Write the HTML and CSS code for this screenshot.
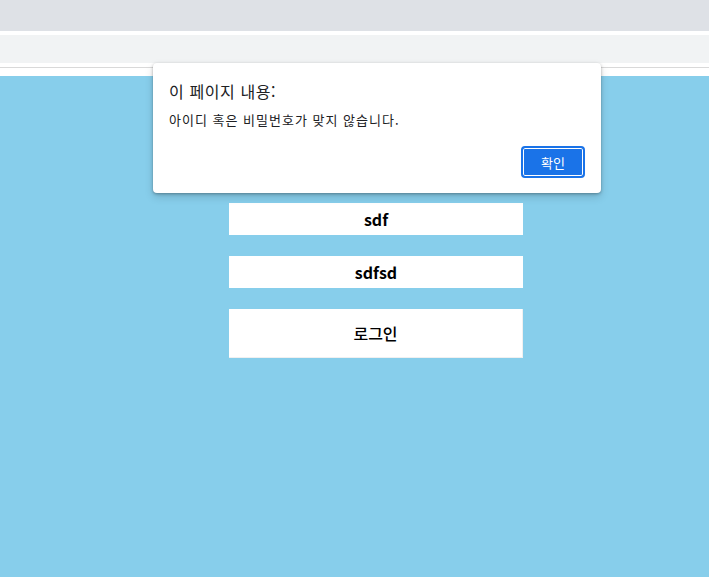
FILE: index.html
```html
<!DOCTYPE html>
<html lang="ko">
<head>
<meta charset="utf-8">
<title>로그인</title>
<link rel="stylesheet" href="styles.css">
</head>
<body>
<div class="chrome">
  <div class="tabs"></div>
  <div class="toolbar"></div>
  <div class="divider"></div>
</div>
<main class="page">
  <form class="login">
    <input class="field" type="text" value="sdf">
    <input class="field" type="text" value="sdfsd">
    <button class="submit" type="button">로그인</button>
  </form>
</main>
<div class="dialog" role="alertdialog">
  <div class="dialog-title">이 페이지 내용:</div>
  <div class="dialog-msg">아이디 혹은 비밀번호가 맞지 않습니다.</div>
  <div class="dialog-actions">
    <button class="ok" type="button">확인</button>
  </div>
</div>
</body>
</html>
```
FILE: styles.css
```css
html, body {
  margin: 0;
  height: 100%;
}
body {
  display: flex;
  flex-direction: column;
  background: #fff;
  font-family: "Noto Sans CJK KR", "Noto Sans", sans-serif;
}
.chrome {
  background: #fff;
}
.tabs {
  height: 31px;
  background: #dee1e6;
  margin-bottom: 4px;
}
.toolbar {
  height: 28px;
  background: #f1f3f4;
  margin-bottom: 4px;
}
.divider {
  height: 1px;
  background: #d9d9d9;
  margin-bottom: 8px;
}
.page {
  flex: 1;
  background: #87ceeb;
  padding: 127px 0 0 229px;
}
.login {
  display: flex;
  flex-direction: column;
  gap: 21px;
  width: 294px;
  margin: 0;
}
.field {
  box-sizing: border-box;
  width: 294px;
  height: 32px;
  border: none;
  margin: 0;
  padding: 0;
  background: #fff;
  text-align: center;
  font-family: "Noto Sans CJK KR", sans-serif;
  font-weight: 700;
  font-size: 16px;
  color: #000;
  outline: none;
}
.submit {
  box-sizing: border-box;
  width: 294px;
  height: 49px;
  border: none;
  border-right: 1px solid #f0f0f0;
  border-bottom: 1px solid #f0f0f0;
  background: #fff;
  font-family: "Noto Sans CJK KR", sans-serif;
  font-size: 16px;
  font-weight: 500;
  color: #000;
  padding: 0;
}
.dialog {
  position: absolute;
  left: 153px;
  top: 63px;
  width: 448px;
  height: 130px;
  box-sizing: border-box;
  padding: 16px 16px 15px 16px;
  background: #fff;
  border-radius: 4px;
  box-shadow: 0 1px 3px rgba(0,0,0,0.3), 0 4px 8px rgba(0,0,0,0.15);
  color: #202124;
  display: flex;
  flex-direction: column;
}
.dialog-title {
  font-size: 16px;
  line-height: 24px;
  letter-spacing: 0.6px;
}
.dialog-msg {
  margin-top: 7px;
  font-size: 13px;
  line-height: 20px;
  letter-spacing: 1px;
}
.dialog-actions {
  margin-top: auto;
  display: flex;
  justify-content: flex-end;
}
.ok {
  box-sizing: border-box;
  width: 64px;
  height: 32px;
  background: #1a73e8;
  border: 2px solid #1a73e8;
  border-radius: 4px;
  box-shadow: inset 0 0 0 1px #fff;
  color: #fff;
  font-family: "Noto Sans CJK KR", sans-serif;
  font-size: 13px;
  padding: 0;
}
```
